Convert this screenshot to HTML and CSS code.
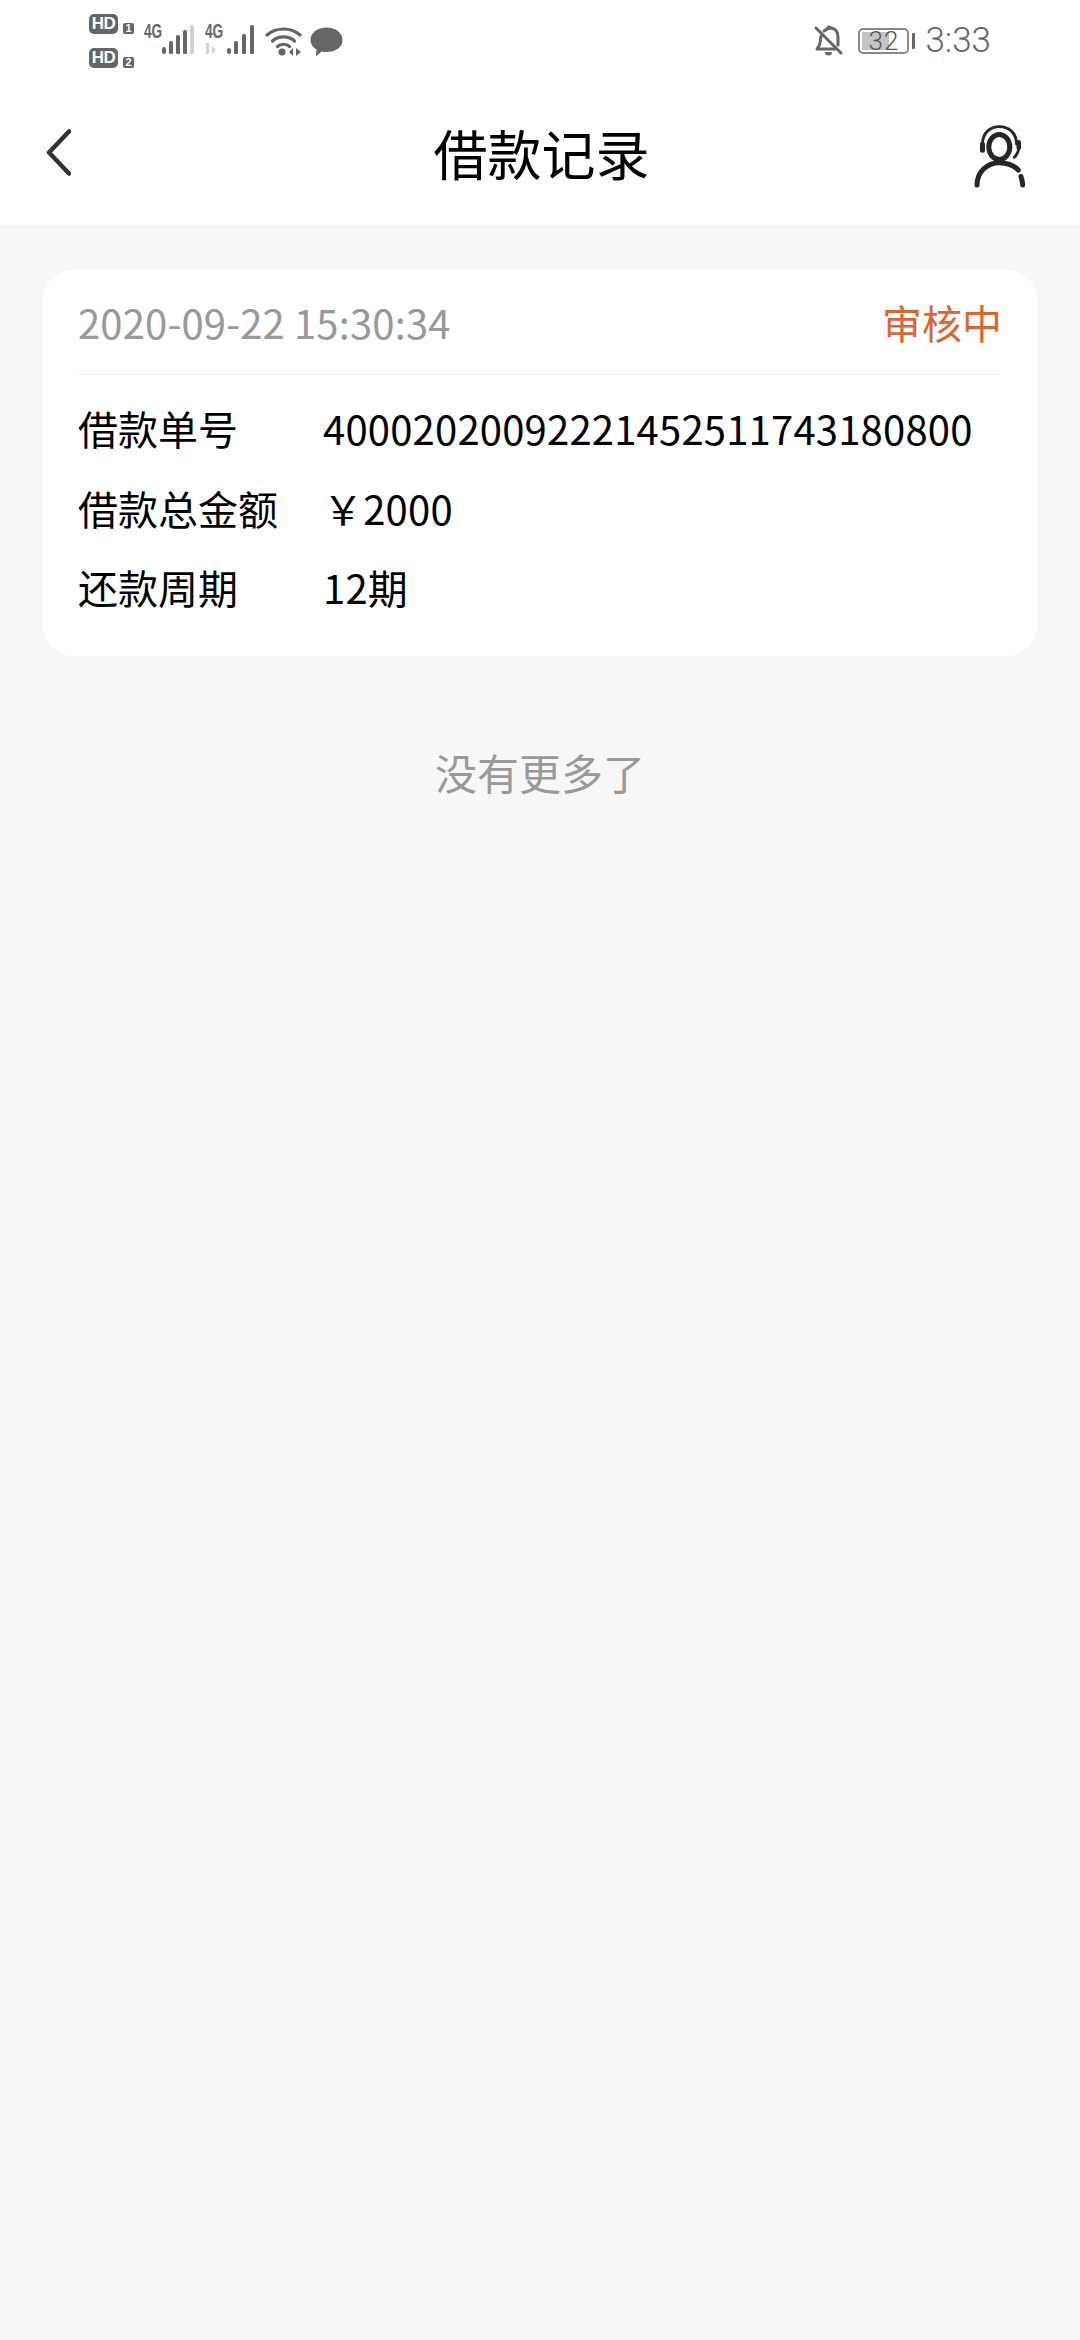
FILE: index.html
```html
<!DOCTYPE html>
<html lang="zh-CN">
  <head>
    <meta charset="UTF-8" />
    <meta name="viewport" content="width=device-width, initial-scale=1.0" />
    <title>借款记录</title>
    <link rel="stylesheet" href="styles.css">
  </head>
  <body>
    <div class="top">
      <div class="status">
        <div class="status-left">
          <div class="hd-stack">
            <div class="hd-row"><span class="hd">HD</span><span class="sim">1</span></div>
            <div class="hd-row"><span class="hd">HD</span><span class="sim">2</span></div>
          </div>
          <div class="net net-one">
            <span class="net-label">4G</span>
            <svg class="bars" width="32" height="30" viewBox="0 0 32 30">
              <g fill="#666">
                <rect x="0" y="22" width="4" height="7" rx="2" />
                <rect x="7" y="16" width="4" height="13" rx="1.500" />
                <rect x="14" y="10" width="4" height="19" rx="1.500" />
                <rect x="21" y="5" width="4" height="24" rx="1.500" />
              </g>
              <rect x="28" y="0" width="4" height="29" rx="1.500" fill="#d2d2d2" />
            </svg>
          </div>
          <div class="net net-two">
            <span class="net-label">4G</span>
            <svg class="bars" width="50" height="30" viewBox="0 0 50 30">
              <path d="M1 18h3v11H1zM7 21l4 4-4 4z" fill="#d2d2d2" />
              <g fill="#666">
                <rect x="22" y="23" width="4" height="6" rx="2" />
                <rect x="29" y="16" width="4" height="13" rx="1.500" />
                <rect x="37" y="9" width="4" height="20" rx="1.500" />
                <rect x="45" y="0" width="4" height="29" rx="1.500" />
              </g>
            </svg>
          </div>
          <svg class="wifi" width="38" height="30" viewBox="0 0 38 30">
            <g fill="none" stroke="#666" stroke-width="3.200" stroke-linecap="round">
              <path d="M2 9C11 1 26 1 35 9" />
              <path d="M7.500 15C13 9.500 24 9.500 29.500 15" />
              <path d="M12.500 20.500C15.500 17.500 21.500 17.500 24.500 20.500" />
            </g>
            <circle cx="17" cy="26" r="3.500" fill="#666" />
            <path d="M28 22v8l-4-4zM31 22l5 4-5 4z" fill="#666" />
          </svg>
          <svg class="chat" width="33" height="30" viewBox="0 0 33 30">
            <path d="M16.500 0.500C25.500 0.500 32.500 5.800 32.500 13C32.500 20.200 25.500 25 16.500 25C14.500 25 13 24.800 11.500 24.400L6 29.500L6.500 22.500C2.800 20.300 0.500 17 0.500 13C0.500 5.800 7.500 0.500 16.500 0.500Z" fill="#666" />
          </svg>
        </div>
        <div class="status-right">
          <svg class="bell" width="30" height="32" viewBox="0 0 30 32">
            <g fill="none" stroke="#666" stroke-width="3" stroke-linecap="round" stroke-linejoin="round">
              <path d="M2 3L27 28" />
              <path d="M7 11C6.500 14 7 20 3 24H21" />
              <path d="M10 6C13 3.500 15 3 17 3C21.500 3.500 24 7.500 24 12V20" />
            </g>
            <path d="M15 0.500a2.500 2.500 0 0 1 2.500 2.500h-5A2.500 2.500 0 0 1 15 0.500zM11 27h7a3.500 3.500 0 0 1-7 0z" fill="#666" />
          </svg>
          <div class="battery">
            <div class="battery-body">
              <div class="battery-fill"></div>
              <span class="battery-num">32</span>
            </div>
            <div class="battery-nub"></div>
          </div>
          <span class="clock">3:33</span>
        </div>
      </div>
      <div class="header">
        <svg class="back" width="25" height="47" viewBox="0 0 25 47">
          <path d="M23 2.500L3 23.500L23 44.500" fill="none" stroke="#333" stroke-width="4.500" stroke-linecap="round" stroke-linejoin="round" />
        </svg>
        <h1 class="title">借款记录</h1>
        <svg class="service" width="60" height="70" viewBox="0 0 60 70">
          <g fill="none" stroke="#262626" stroke-linecap="round">
            <ellipse cx="28.300" cy="25" rx="10.500" ry="12.500" stroke-width="5" />
            <path d="M11.500 22C11.500 10 20 4.700 28.300 4.700C37 4.700 45.500 10 45.500 22" stroke-width="2.800" />
            <path d="M48.300 23C47.800 28 46 33 43.300 35.300" stroke-width="2.800" />
            <path d="M6 63C6 50 16 40.700 28.300 40.700C36 40.700 43 43.500 47.300 48" stroke-width="5" />
            <path d="M50 54.500C50.800 57 51.500 60 51.700 63" stroke-width="5" />
          </g>
          <rect x="9" y="19.700" width="5" height="11" rx="2.500" fill="#262626" />
          <rect x="45.500" y="18" width="4.500" height="10" rx="2.200" fill="#262626" />
        </svg>
      </div>
    </div>

    <div class="card">
      <div class="card-head">
        <span class="date">2020-09-22 15:30:34</span>
        <span class="state">审核中</span>
      </div>
      <div class="rows">
        <div class="row"><span class="label">借款单号</span><span class="value">40002020092221452511743180800</span></div>
        <div class="row"><span class="label">借款总金额</span><span class="value">￥2000</span></div>
        <div class="row"><span class="label">还款周期</span><span class="value">12期</span></div>
      </div>
    </div>

    <p class="no-more">没有更多了</p>
  </body>
</html>
```

FILE: styles.css
```css
* {
  box-sizing: border-box;
}
html,
body {
  margin: 0;
  height: 2340px;
}
body {
  background-color: #f7f7f7;
  color: #000;
  font-family: "Noto Sans CJK SC", "Noto Sans", sans-serif;
}
.top {
  background-color: #fff;
}
.status {
  display: flex;
  justify-content: space-between;
  height: 78px;
  padding: 14px 89px 0 89px;
  color: #666;
}
.status-left {
  display: flex;
  align-items: flex-start;
}
.status-right {
  display: flex;
  align-items: flex-start;
  padding-top: 11px;
}
.hd-stack {
  display: flex;
  flex-direction: column;
  gap: 14px;
  width: 55px;
}
.hd-row {
  display: flex;
  align-items: flex-end;
  gap: 5px;
}
.hd {
  width: 29px;
  height: 20px;
  border-radius: 5px;
  background-color: #666;
  color: #fff;
  font: bold 17px/20px "Liberation Sans", sans-serif;
  letter-spacing: -0.5px;
  text-align: center;
}
.sim {
  width: 11px;
  height: 11px;
  border-radius: 2px;
  background-color: #666;
  color: #fff;
  font: bold 11px/11px "Liberation Sans", sans-serif;
  text-align: center;
}
.net {
  position: relative;
  height: 41px;
}
.net-one {
  width: 61px;
}
.net-two {
  width: 60px;
}
.net-label {
  display: block;
  width: 28px;
  margin-top: 8px;
  color: #666;
  font: bold 21px/18px "Liberation Sans", sans-serif;
  transform: scaleX(0.65);
  transform-origin: left center;
}
.bars {
  position: absolute;
  top: 11px;
  left: 18px;
}
.net-two .bars {
  left: 0;
}
.wifi {
  margin-top: 12px;
}
.chat {
  margin: 13px 0 0 7px;
}
.bell {
  margin: 0 14px 0 3px;
}
.battery {
  display: flex;
  align-items: center;
  gap: 3px;
  height: 32px;
}
.battery-body {
  position: relative;
  width: 51px;
  height: 26px;
  border: 2px solid #888;
  border-radius: 5px;
}
.battery-fill {
  width: 27px;
  height: 18px;
  margin: 2px;
  background-color: #c4c4c4;
}
.battery-num {
  position: absolute;
  top: 0;
  left: 0;
  width: 100%;
  color: #555;
  font: 300 26px/22px Roboto, sans-serif;
  letter-spacing: 1px;
  text-align: center;
}
.battery-nub {
  width: 3px;
  height: 16px;
  border-radius: 1px;
  background-color: #666;
}
.clock {
  margin-left: 10px;
  color: #666;
  font: 300 35px/32px Roboto, sans-serif;
}
.header {
  display: flex;
  align-items: center;
  height: 147px;
  padding: 0 49px 0 46px;
}
.back {
  margin-top: 1px;
}
.title {
  flex: 1;
  margin: 2px 0 0 41px;
  font-size: 54px;
  font-weight: 400;
  line-height: 70px;
  text-align: center;
}
.service {
  margin-top: 10px;
}
.card {
  margin: 45px 43px 0 43px;
  padding: 0 35px 26px;
  border-radius: 30px;
  background-color: #fff;
}
.card-head {
  display: flex;
  align-items: center;
  justify-content: space-between;
  height: 105px;
  border-bottom: 1px solid #eee;
  font-size: 40px;
}
.date {
  color: #999;
  letter-spacing: 0.15px;
}
.state {
  color: #dc6632;
}
.rows {
  padding-top: 14px;
  padding-bottom: 2px;
}
.row {
  display: grid;
  grid-template-columns: 245px 1fr;
  font-size: 40px;
  line-height: 79.500px;
}
.value {
  letter-spacing: 0.2px;
}
.no-more {
  margin: 86px 0 0;
  color: #999;
  font-size: 42px;
  line-height: 60px;
  text-align: center;
}
```
